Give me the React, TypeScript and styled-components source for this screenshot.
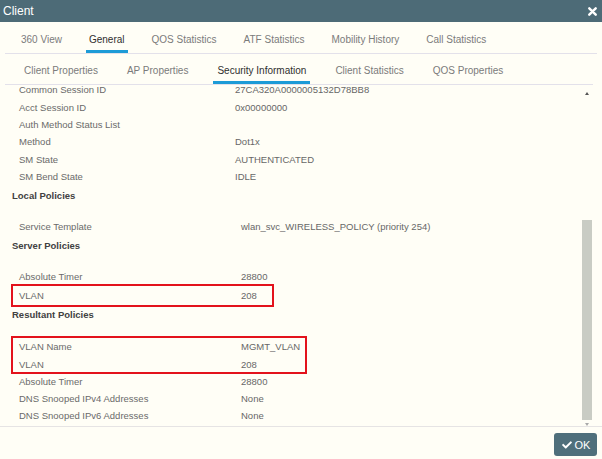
import React from 'react';
import styled, { createGlobalStyle } from 'styled-components';
import { FaCheck } from 'react-icons/fa';

const cream = '#fffef6';
const slate = '#4d6b77';

const GlobalStyle = createGlobalStyle`
  html, body {
    margin: 0;
    padding: 0;
    background: ${cream};
  }
  body {
    font-family: "Liberation Sans", Arial, sans-serif;
  }
`;

const Dialog = styled.div`
  width: 602px;
  height: 459px;
  display: flex;
  flex-direction: column;
  background: ${cream};
  overflow: hidden;
`;

const TitleBar = styled.div`
  height: 22px;
  flex: none;
  display: flex;
  align-items: center;
  justify-content: space-between;
  padding: 0 5px 0 3px;
  background: ${slate};
  color: #fff;
  font-size: 12px;
`;

const CloseButton = styled.button`
  border: 0;
  padding: 0;
  background: none;
  display: flex;
  cursor: pointer;
`;

const TabBar = styled.div<{ $top: number; $left: number; $right: number; $gap: number }>`
  flex: none;
  display: flex;
  gap: ${({ $gap }) => $gap}px;
  margin: 0 ${({ $right }) => $right}px 0 5px;
  padding: ${({ $top }) => $top}px 0 0 ${({ $left }) => $left}px;
  border-bottom: 1px solid #e3e1ea;
`;

const Tab = styled.div<{ $active?: boolean; $pad: number; $h: number }>`
  height: ${({ $h }) => $h}px;
  padding: 0 ${({ $pad }) => $pad}px;
  font-size: 10px;
  line-height: 12px;
  white-space: nowrap;
  color: ${({ $active }) => ($active ? '#2f2f2f' : '#7b7b7b')};
  box-shadow: ${({ $active }) => ($active ? 'inset 0 -3px 0 #1d9bd7' : 'none')};
  cursor: pointer;
`;

const Body = styled.div`
  flex: none;
  height: 341px;
  display: flex;
  border-bottom: 1px solid #e6e4e4;
`;

const Scroller = styled.div`
  flex: 1;
  overflow: hidden;
  padding-left: 12px;
`;

const List = styled.div`
  margin-top: -4px;
  font-size: 9.5px;
`;

const Table = styled.div<{ $labelW: number; $rowH: number; $top?: number }>`
  display: grid;
  grid-template-columns: ${({ $labelW }) => $labelW}px 1fr;
  grid-auto-rows: ${({ $rowH }) => $rowH}px;
  align-items: center;
  margin-top: ${({ $top = 0 }) => $top}px;
`;

const Label = styled.div`
  padding-left: 7px;
  color: #6a6a6a;
  white-space: nowrap;
`;

const Value = styled.div`
  color: #676767;
  white-space: nowrap;
`;

const SectionTitle = styled.div<{ $h: number }>`
  height: ${({ $h }) => $h}px;
  display: flex;
  align-items: center;
  font-weight: 700;
  color: #414141;
`;

const Marked = styled.div<{ $w: number; $top: number; $bottom: number }>`
  position: relative;
  &::after {
    content: '';
    position: absolute;
    left: -1px;
    top: ${({ $top }) => $top}px;
    bottom: ${({ $bottom }) => $bottom}px;
    width: ${({ $w }) => $w}px;
    border: 2px solid #e3121c;
    box-sizing: border-box;
    pointer-events: none;
  }
`;

const ScrollBar = styled.div`
  width: 10px;
  flex: none;
  margin-right: 10px;
  display: flex;
  flex-direction: column;
  align-items: center;
`;

const Arrow = styled.div<{ $up?: boolean }>`
  width: 0;
  height: 0;
  margin: ${({ $up }) => ($up ? '7px 0 0' : '3px 0 0')};
  border-left: 2.5px solid transparent;
  border-right: 2.5px solid transparent;
  ${({ $up }) =>
    $up ? 'border-bottom: 3px solid #555;' : 'border-top: 3px solid #a9a9a9;'}
`;

const Track = styled.div`
  flex: 1;
  align-self: stretch;
  display: flex;
  flex-direction: column;
  justify-content: flex-end;
`;

const Thumb = styled.div`
  height: 200px;
  background: #c9ccc4;
`;

const Footer = styled.div`
  flex: 1;
  display: flex;
  justify-content: flex-end;
  align-items: flex-start;
  padding: 6px 5px 0 0;
`;

const OkButton = styled.button`
  width: 43px;
  height: 23px;
  border: 0;
  border-radius: 3px;
  background: #4f6f7b;
  color: #fff;
  font-family: inherit;
  font-size: 11px;
  display: flex;
  align-items: center;
  justify-content: center;
  gap: 3px;
  padding: 0 0 0 1px;
  cursor: pointer;
`;

const mainTabs = ['360 View', 'General', 'QOS Statistics', 'ATF Statistics', 'Mobility History', 'Call Statistics'];
const subTabs = ['Client Properties', 'AP Properties', 'Security Information', 'Client Statistics', 'QOS Properties'];

const sessionRows: [string, string][] = [
  ['Common Session ID', '27CA320A0000005132D78BB8'],
  ['Acct Session ID', '0x00000000'],
  ['Auth Method Status List', ''],
  ['Method', 'Dot1x'],
  ['SM State', 'AUTHENTICATED'],
  ['SM Bend State', 'IDLE'],
];

const resultantRest: [string, string][] = [
  ['Absolute Timer', '28800'],
  ['DNS Snooped IPv4 Addresses', 'None'],
  ['DNS Snooped IPv6 Addresses', 'None'],
];

const Rows: React.FC<{ rows: [string, string][] }> = ({ rows }) => (
  <>
    {rows.map(([label, value], i) => (
      <React.Fragment key={label + i}>
        <Label>{label}</Label>
        <Value>{value}</Value>
      </React.Fragment>
    ))}
  </>
);

export default function App() {
  return (
    <>
      <GlobalStyle />
      <Dialog>
        <TitleBar>
          <span>Client</span>
          <CloseButton aria-label="Close">
            <svg width="9" height="9" viewBox="0 0 9 9">
              <path d="M1.3 1.3 L7.7 7.7 M7.7 1.3 L1.3 7.7" stroke="#fff" strokeWidth="2.4" strokeLinecap="round" />
            </svg>
          </CloseButton>
        </TitleBar>

        <TabBar $top={12} $left={13} $right={5} $gap={21}>
          {mainTabs.map(t => (
            <Tab key={t} $pad={3} $h={19} $active={t === 'General'}>{t}</Tab>
          ))}
        </TabBar>

        <TabBar $top={11} $left={15} $right={9} $gap={21}>
          {subTabs.map(t => (
            <Tab key={t} $pad={4} $h={19} $active={t === 'Security Information'}>{t}</Tab>
          ))}
        </TabBar>

        <Body>
          <Scroller>
            <List>
              <Table $labelW={223} $rowH={17.4}>
                <Rows rows={sessionRows} />
              </Table>

              <SectionTitle $h={21}>Local Policies</SectionTitle>
              <Table $labelW={229} $rowH={19} $top={11}>
                <Rows rows={[['Service Template', 'wlan_svc_WIRELESS_POLICY (priority 254)']]} />
              </Table>

              <SectionTitle $h={19}>Server Policies</SectionTitle>
              <Table $labelW={229} $rowH={19} $top={12}>
                <Rows rows={[['Absolute Timer', '28800']]} />
              </Table>
              <Marked $w={263} $top={-2} $bottom={-2}>
                <Table $labelW={229} $rowH={19}>
                  <Rows rows={[['VLAN', '208']]} />
                </Table>
              </Marked>

              <SectionTitle $h={19}>Resultant Policies</SectionTitle>
              <Marked $w={296} $top={-2} $bottom={-1}>
                <Table $labelW={229} $rowH={17.25} $top={14}>
                  <Rows rows={[['VLAN Name', 'MGMT_VLAN'], ['VLAN', '208']]} />
                </Table>
              </Marked>
              <Table $labelW={229} $rowH={17.25}>
                <Rows rows={resultantRest} />
              </Table>
            </List>
          </Scroller>

          <ScrollBar>
            <Arrow $up />
            <Track>
              <Thumb />
            </Track>
            <Arrow />
          </ScrollBar>
        </Body>

        <Footer>
          <OkButton>
            <FaCheck size={10} />
            OK
          </OkButton>
        </Footer>
      </Dialog>
    </>
  );
}
